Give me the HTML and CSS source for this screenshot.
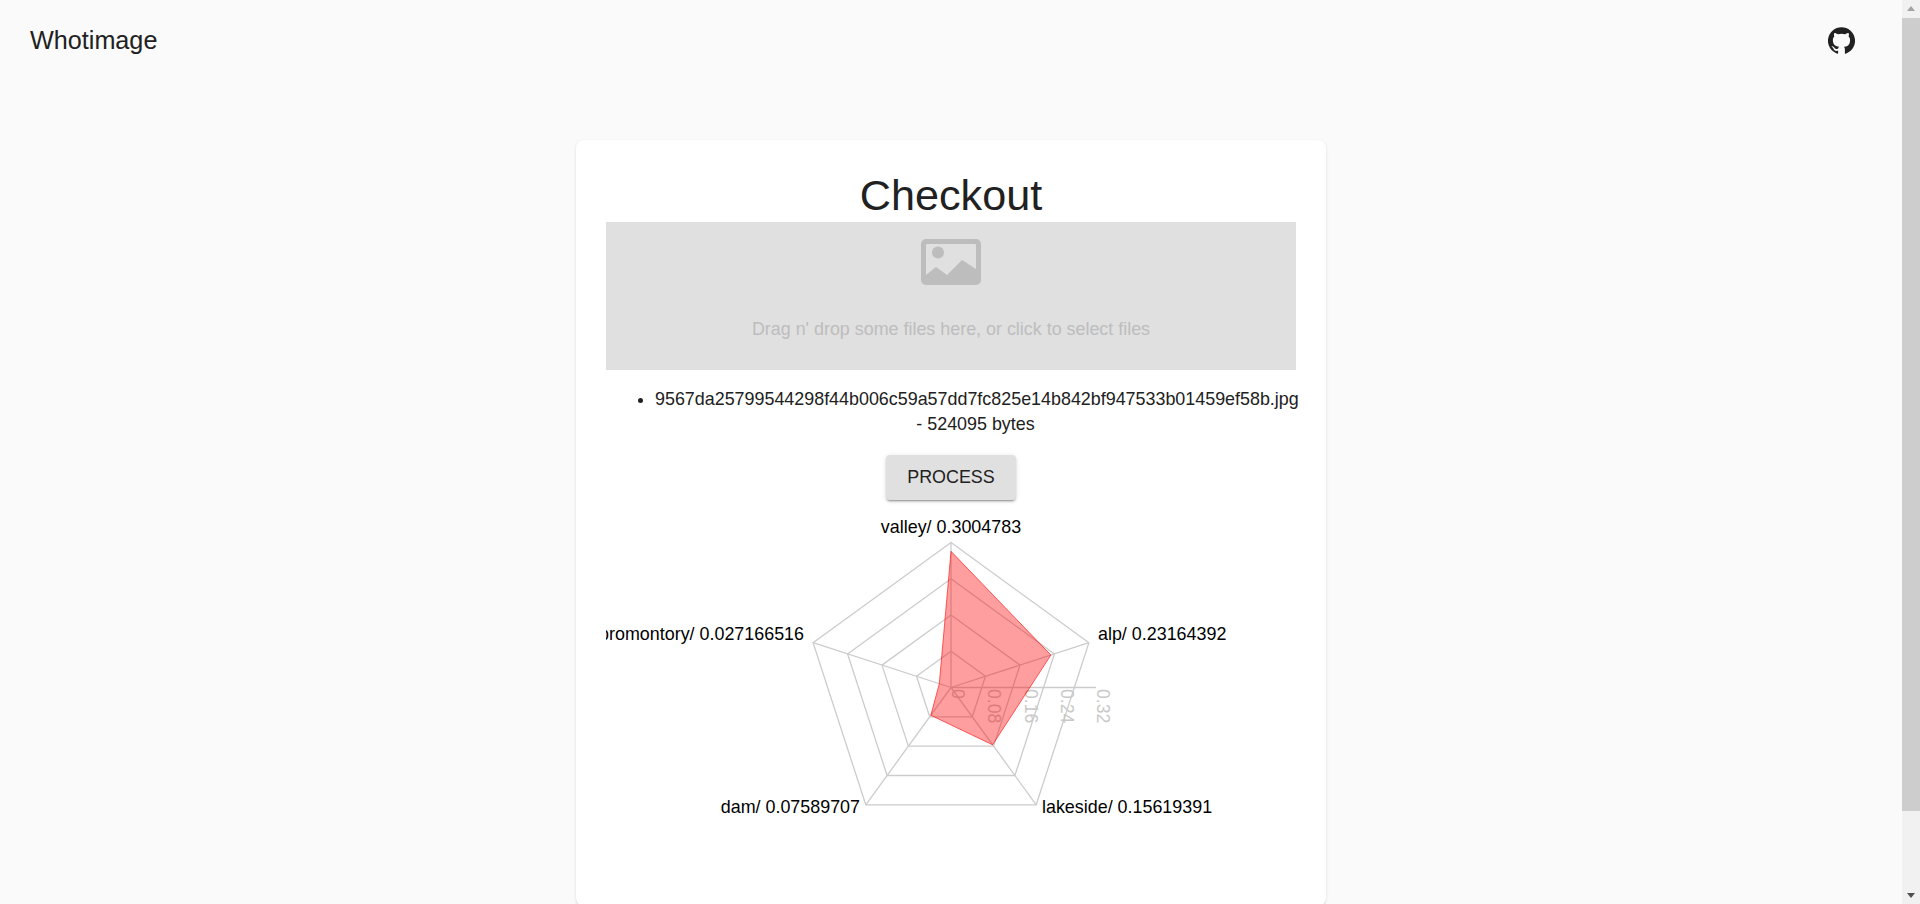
FILE: index.html
```html
<!DOCTYPE html>
<html lang="en">
<head>
    <meta charset="UTF-8">
    <meta name="viewport" content="width=device-width, initial-scale=1.0">
    <title>Whotimage</title>
    <link rel="stylesheet" href="styles.css">
</head>
<body>
    <div class="page">
        <div class="content">
            <header class="topbar">
                <span class="brand">Whotimage</span>
                <a class="github-link" href="#" aria-label="GitHub">
                    <svg class="github-icon" viewBox="0 0 24 24">
                        <path d="M12 .3a12 12 0 0 0-3.8 23.4c.6.1.8-.3.8-.6v-2c-3.3.7-4-1.6-4-1.6-.6-1.4-1.4-1.8-1.4-1.8-1-.7.1-.7.1-.7 1.2 0 1.9 1.2 1.9 1.2 1 1.8 2.8 1.3 3.5 1 0-.8.4-1.3.7-1.6-2.7-.3-5.5-1.3-5.5-6 0-1.2.5-2.3 1.3-3.1-.2-.4-.6-1.6 0-3.2 0 0 1-.3 3.4 1.2a11.5 11.5 0 0 1 6 0c2.3-1.5 3.3-1.2 3.3-1.2.6 1.6.2 2.8 0 3.2.9.8 1.3 1.9 1.3 3.2 0 4.6-2.8 5.6-5.5 5.9.5.4.9 1 .9 2.2v3.3c0 .3.1.7.8.6A12 12 0 0 0 12 .3"/>
                    </svg>
                </a>
            </header>

            <main class="card">
                <h1 class="card-title">Checkout</h1>

                <div class="dropzone">
                    <svg class="dropzone-icon" viewBox="0 0 60 46">
                        <path fill-rule="evenodd" d="M5 0H55a5 5 0 0 1 5 5V41a5 5 0 0 1-5 5H5a5 5 0 0 1-5-5V5a5 5 0 0 1 5-5ZM6 5a1 1 0 0 0-1 1V36L15 28 26 36 41 21 55 30V6a1 1 0 0 0-1-1Z"/>
                        <circle cx="17" cy="13.500" r="6"/>
                    </svg>
                    <p class="dropzone-text">Drag n' drop some files here, or click to select files</p>
                </div>

                <ul class="file-list">
                    <li>9567da25799544298f44b006c59a57dd7fc825e14b842bf947533b01459ef58b.jpg - 524095 bytes</li>
                </ul>

                <button class="process-btn" type="button">Process</button>

                <svg class="radar" width="690" height="355" viewBox="0 0 690 355">
                    <g class="radar-grid">
                        <polygon points="345,32.5 482.900,132.700 430.200,294.800 259.800,294.800 207.100,132.700"/>
                        <polygon points="345,68.750 448.400,143.900 408.900,265.500 281.100,265.500 241.600,143.900"/>
                        <polygon points="345,105 414,155.100 387.600,236.200 302.400,236.200 276,155.100"/>
                        <polygon points="345,141.250 379.500,166.300 366.300,206.800 323.700,206.800 310.500,166.300"/>
                        <line x1="345" y1="177.500" x2="345" y2="32.500"/>
                        <line x1="345" y1="177.500" x2="482.900" y2="132.700"/>
                        <line x1="345" y1="177.500" x2="430.200" y2="294.800"/>
                        <line x1="345" y1="177.500" x2="259.800" y2="294.800"/>
                        <line x1="345" y1="177.500" x2="207.100" y2="132.700"/>
                        <line x1="345" y1="177.500" x2="490" y2="177.500"/>
                    </g>

                    <g class="radar-ticks">
                        <text transform="translate(346 179) rotate(90)">0</text>
                        <text transform="translate(382.250 179) rotate(90)">0.08</text>
                        <text transform="translate(418.500 179) rotate(90)">0.16</text>
                        <text transform="translate(454.750 179) rotate(90)">0.24</text>
                        <text transform="translate(491 179) rotate(90)">0.32</text>
                    </g>

                    <g class="radar-labels">
                        <text x="345" y="23" text-anchor="middle">valley/ 0.3004783</text>
                        <text x="492" y="130">alp/ 0.23164392</text>
                        <text x="436" y="303">lakeside/ 0.15619391</text>
                        <text x="254" y="303" text-anchor="end">dam/ 0.07589707</text>
                        <text x="198" y="130" text-anchor="end">promontory/ 0.027166516</text>
                    </g>

                    <polygon class="radar-shape" points="345,41.300 444.900,145.100 386.600,234.800 324.800,205.300 333.300,173.700"/>
                </svg>
            </main>
        </div>

        <div class="scrollbar">
            <span class="scroll-arrow scroll-arrow-up"></span>
            <div class="scroll-track">
                <div class="scroll-thumb"></div>
            </div>
            <span class="scroll-arrow scroll-arrow-down"></span>
        </div>
    </div>
</body>
</html>
```

FILE: styles.css
```css
html, body {
    height: 100%;
    margin: 0;
    overflow: hidden;
}

body {
    font-family: "Liberation Sans", Arial, sans-serif;
    font-size: 17.9px;
    color: #212121;
    background-color: #fafafa;
}

.page {
    display: flex;
    height: 100%;
}

.content {
    flex: 1;
    min-width: 0;
    overflow: hidden;
}

.topbar {
    display: flex;
    align-items: center;
    justify-content: space-between;
    height: 81px;
    padding: 0 47px 0 30px;
}

.brand {
    font-size: 25.2px;
}

.github-link {
    display: flex;
    color: #212121;
}

.github-icon {
    width: 27px;
    height: 27px;
    fill: currentColor;
}

.card {
    box-sizing: border-box;
    width: 750px;
    height: 766px;
    margin: 58.5px auto 0;
    padding: 28px 30px 0;
    text-align: center;
    background-color: #fff;
    border-radius: 8px;
    box-shadow: 0 1px 3px rgba(0, 0, 0, 0.12), 0 1px 1px rgba(0, 0, 0, 0.06);
}

.card-title {
    margin: 0;
    font-size: 43.2px;
    font-weight: 400;
    line-height: 54px;
}

.dropzone {
    display: flex;
    flex-direction: column;
    align-items: center;
    box-sizing: border-box;
    height: 148px;
    padding-top: 17px;
    background-color: #e0e0e0;
}

.dropzone-icon {
    width: 60px;
    height: 46px;
    fill: #bdbdbd;
}

.dropzone-text {
    margin: 34px 0 0;
    color: #bdbdbd;
}

.file-list {
    margin: 17px 0 0;
    padding: 0 0 0 49px;
    line-height: 25px;
}

.process-btn {
    display: block;
    width: 130px;
    height: 45px;
    margin: 18px auto 0;
    padding: 0;
    font-family: inherit;
    font-size: 17.9px;
    color: #212121;
    text-transform: uppercase;
    background-color: #e0e0e0;
    border: none;
    border-radius: 4px;
    box-shadow: 0 3px 1px -2px rgba(0, 0, 0, 0.2), 0 2px 2px 0 rgba(0, 0, 0, 0.14), 0 1px 5px 0 rgba(0, 0, 0, 0.12);
    cursor: pointer;
}

.radar {
    display: block;
    margin-top: 10px;
    overflow: hidden;
}

.radar-grid polygon, .radar-grid line {
    fill: none;
    stroke: #ccc;
    stroke-width: 1.3;
}

.radar-ticks text {
    font-size: 17.6px;
    fill: #c8c8c8;
}

.radar-labels text {
    font-size: 17.9px;
    fill: #000;
}

.radar-shape {
    fill: #f00;
    fill-opacity: 0.38;
    stroke: #f00;
    stroke-opacity: 0.6;
}

.scrollbar {
    display: flex;
    flex-direction: column;
    flex: none;
    width: 18px;
    background-color: #f1f1f1;
}

.scroll-arrow {
    position: relative;
    flex: none;
    height: 18px;
}

.scroll-arrow::after {
    content: "";
    position: absolute;
    left: 5px;
    width: 0;
    height: 0;
    border-left: 4px solid transparent;
    border-right: 4px solid transparent;
}

.scroll-arrow-up::after {
    top: 6px;
    border-bottom: 5px solid #a3a3a3;
}

.scroll-arrow-down::after {
    top: 7px;
    border-top: 5px solid #505050;
}

.scroll-track {
    flex: 1;
}

.scroll-thumb {
    height: 793px;
    background-color: #cdcdcd;
}
```
